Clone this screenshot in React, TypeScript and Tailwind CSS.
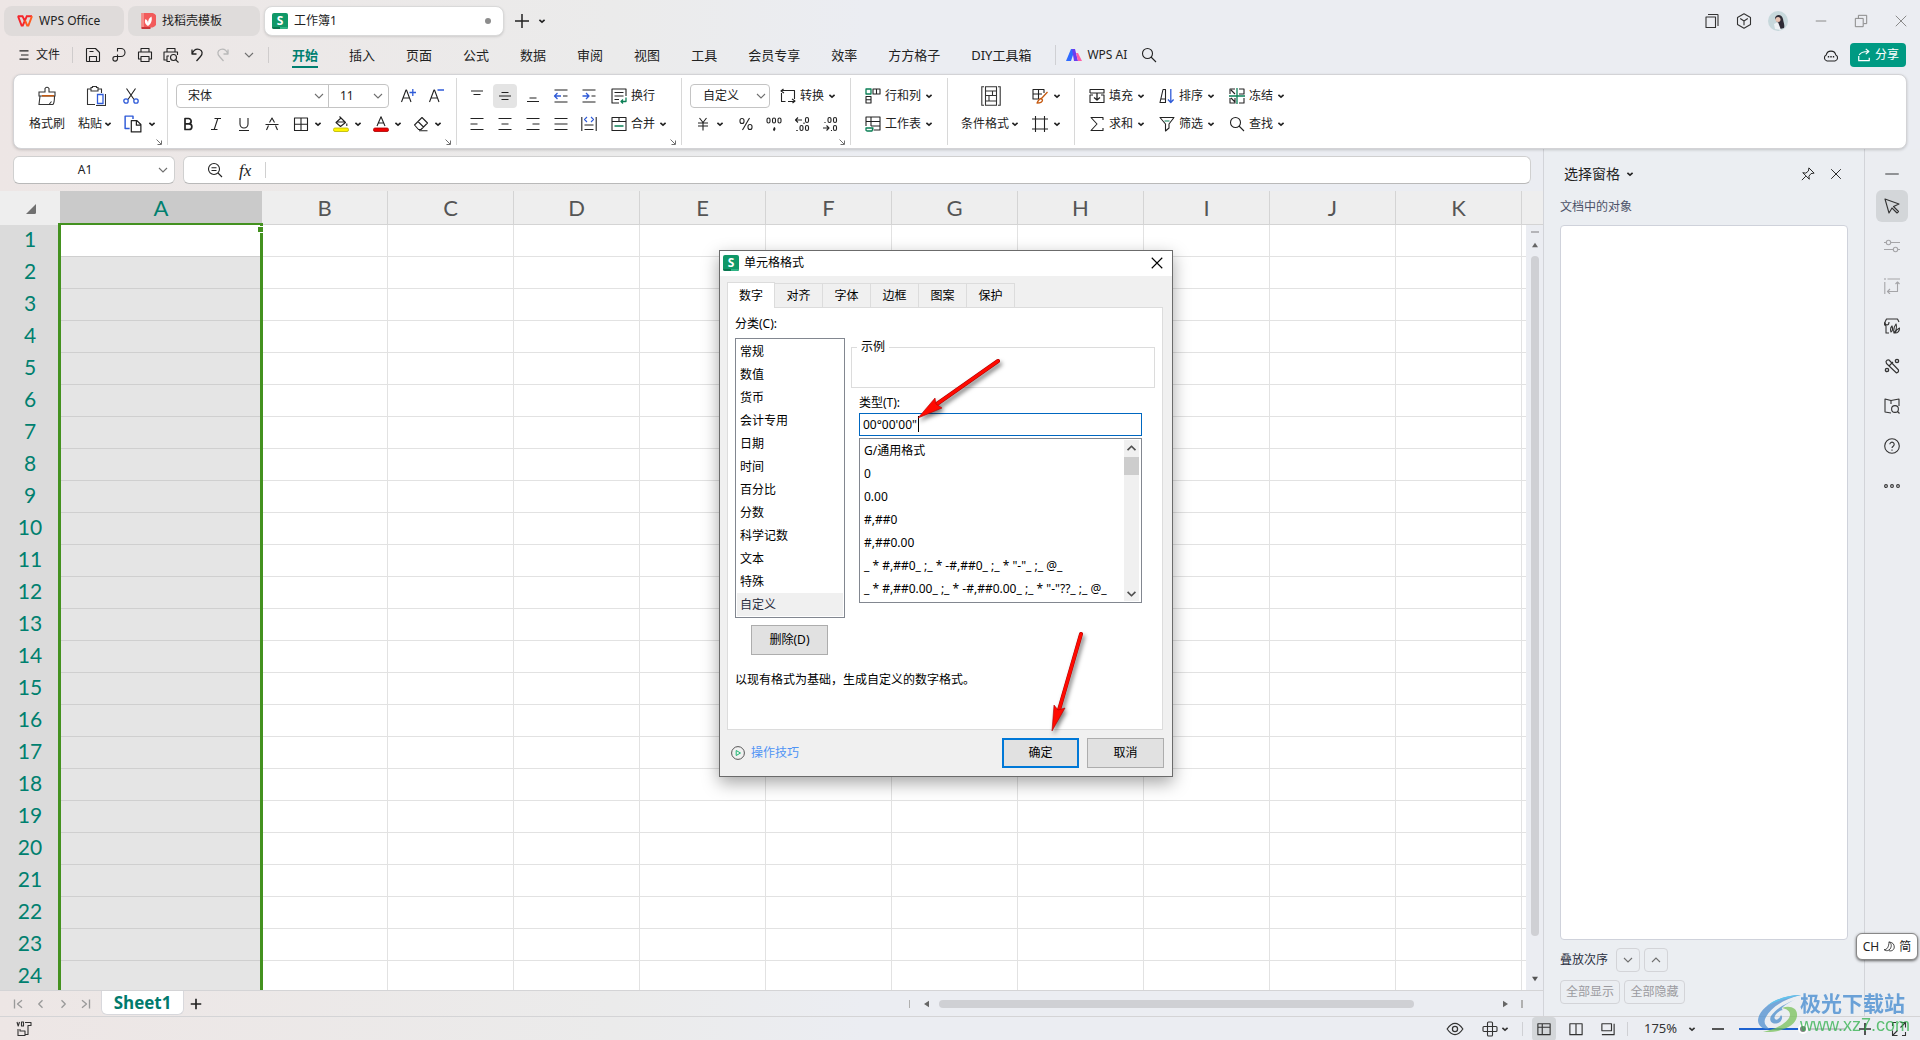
import { useState, type ReactNode } from "react";

const MENUS = ["开始", "插入", "页面", "公式", "数据", "审阅", "视图", "工具", "会员专享", "效率", "方方格子", "DIY工具箱"];
const COLS = ["B", "C", "D", "E", "F", "G", "H", "I", "J", "K"];
const ROWS = Array.from({ length: 24 }, (_, i) => i + 1);
const DIALOG_TABS = ["数字", "对齐", "字体", "边框", "图案", "保护"];
const CATEGORIES = ["常规", "数值", "货币", "会计专用", "日期", "时间", "百分比", "分数", "科学记数", "文本", "特殊", "自定义"];
const FORMATS = [
  "G/通用格式",
  "0",
  "0.00",
  "#,##0",
  "#,##0.00",
  '_ * #,##0_ ;_ * -#,##0_ ;_ * "-"_ ;_ @_ ',
  '_ * #,##0.00_ ;_ * -#,##0.00_ ;_ * "-"??_ ;_ @_ ',
];

const BLUE = "#2f5bd8";
const GREEN = "#0a7f55";
const ORANGE = "#c55a11";

// 16x16 line icon
function Ic({ children, className = "size-4" }: { children: ReactNode; className?: string }) {
  return (
    <svg viewBox="0 0 16 16" className={`shrink-0 ${className}`} fill="none" stroke="currentColor" strokeWidth="1.1" strokeLinejoin="round">
      {children}
    </svg>
  );
}

function Caret() {
  return (
    <svg viewBox="0 0 10 10" className="size-[10px] shrink-0" fill="none" stroke="currentColor" strokeWidth="1.6">
      <path d="M2.4 3.8 5 6.2 7.6 3.8" />
    </svg>
  );
}

function WideCaret({ className = "" }: { className?: string }) {
  return (
    <svg viewBox="0 0 10 10" className={`size-[10px] shrink-0 text-[#707070] ${className}`} fill="none" stroke="currentColor" strokeWidth="1.1">
      <path d="M1 3 5 7 9 3" />
    </svg>
  );
}

function IconBtn({ label, active, children }: { label: string; active?: boolean; children: ReactNode }) {
  return (
    <button aria-label={label} className="flex h-6 w-7 items-center justify-center">
      <span className={`flex h-6 w-6 items-center justify-center rounded ${active ? "bg-[#e4e4e4]" : ""}`}>{children}</span>
    </button>
  );
}

function DropBtn({ label, children }: { label: string; children: ReactNode }) {
  return (
    <button aria-label={label} className="flex h-6 w-10 items-center pl-0.5">
      <span className="flex w-6 justify-center">{children}</span>
      <Caret />
    </button>
  );
}

function TextBtn({ text, caret = true, children }: { text: string; caret?: boolean; children: ReactNode }) {
  return (
    <button className="flex h-6 items-center">
      <span className="flex w-6 justify-center">{children}</span>
      <span className="mr-[3px]">{text}</span>
      {caret && <Caret />}
    </button>
  );
}

function Group({ width, corner, children }: { width: string; corner?: boolean; children: ReactNode }) {
  return (
    <div className={`relative flex shrink-0 pt-[9px] ${width}`}>
      {children}
      {corner && (
        <svg viewBox="0 0 8 8" className="absolute bottom-0.5 right-1 size-2 text-[#707070]" fill="none" stroke="currentColor">
          <path d="M1.5 1.5 6 6M6.5 2.5v4h-4" />
        </svg>
      )}
    </div>
  );
}

const Divider = () => <div className="my-[3px] w-px shrink-0 bg-[#d8d8d8]" />;

function SheetLogo({ className }: { className: string }) {
  return (
    <span className={`relative flex items-center justify-center overflow-hidden rounded-[2px] bg-[#109868] font-bold leading-none text-white ${className}`}>
      <span className="absolute inset-x-0 bottom-0 h-0.5 bg-[#0a7650]" />
      <span className="absolute bottom-0 right-0 h-0.5 w-1/2 bg-[#2fb585]" />
      S
    </span>
  );
}

function TitleBar() {
  return (
    <header className="flex h-9 shrink-0 items-center gap-1 pl-1 pt-1.5">
      <button className="flex h-[30px] w-[120px] items-center gap-[6px] rounded-lg bg-[#dfdbda] pl-[13px]">
        <svg viewBox="0 0 16 12" className="h-3 w-4" fill="none" strokeWidth="1.900">
          <path d="M.8 1.200h4.700L8.300 7M1 1.200l3.600 9.300h1.200L9.800 1.200h5.200" stroke="#f5252b" />
          <path d="M15 1.200 11.400 10.500h-1.200L8 5.500" stroke="#ff5a1f" />
        </svg>
        WPS Office
      </button>
      <button className="flex h-[30px] w-[132px] items-center gap-[6px] rounded-lg bg-[#dfdcdb] pl-[13px]">
        <svg viewBox="0 0 14 16" className="h-4 w-[15px]">
          <path d="M0 0h7a7 7.500 0 0 1 4 14.500H0z" fill="#f25b5b" />
          <path d="M0 0h2.500v15H0z" fill="#f58a86" />
          <path d="M0 14h9v2H0z" fill="#c9363a" />
          <path d="M6.500 13C3 11 3 8 4 6c2 1 2.500 3 2.500 4.500C6.500 7 7.500 5 10 3.500c1 4-.500 7.500-3.500 9.500z" fill="#fff" />
        </svg>
        找稻壳模板
      </button>
      <button className="flex h-[30px] w-60 items-center rounded-lg border border-[#d9d9d9] bg-white pl-[7px] pr-[12px] shadow-sm">
        <SheetLogo className="mr-[6px] size-4 text-[12px]" />
        工作簿1
        <span className="ml-auto size-1.5 rounded-full bg-[#8c8c8c]" />
      </button>
      <button aria-label="新建" className="ml-1.5">
        <Ic className="size-4"><path d="M8 1v14M1 8h14" strokeWidth="1.500" /></Ic>
      </button>
      <button aria-label="标签列表" className="ml-[3px]"><Caret /></button>
      <div className="ml-auto flex items-center pr-3 text-[#333]">
        <button aria-label="窗口" className="mr-4"><Ic><path d="M2 4h9.500v10.500H2zM4 1.500h9.500q.5 0 .5.500v11" /></Ic></button>
        <button aria-label="应用" className="mr-4">
          <Ic><path d="M8 .8 14.500 4.500v7L8 15.200 1.500 11.500v-7zM4.200 5.500 8 8l3.800-2.500M8 8v4.200" /></Ic>
        </button>
        <button aria-label="账户" className="mr-[26px]">
          <svg viewBox="0 0 20 20" className="size-5">
            <circle cx="10" cy="10" r="10" fill="#c7d8dc" />
            <path d="M7 7c1-4 7-4 8 1 .500 4 2 6 1 9l-4 1-3-7z" fill="#2d2a35" />
            <circle cx="10" cy="8.500" r="2.500" fill="#e8c4b4" />
            <path d="M6 13l4-2 3 8-6-1z" fill="#eef2f5" />
          </svg>
        </button>
        <div className="flex items-center gap-[26px] text-[#858585]">
          <button aria-label="最小化"><Ic className="size-3.5"><path d="M2 8h12" /></Ic></button>
          <button aria-label="还原"><Ic className="size-3.5"><path d="M1.500 5h9v9.500h-9zM5 5V1.500h9.500V11H11" /></Ic></button>
          <button aria-label="关闭"><Ic className="size-3.5"><path d="m2 2 12 12M14 2 2 14" /></Ic></button>
        </div>
      </div>
    </header>
  );
}

function MenuBar() {
  const [menu, setMenu] = useState("开始");
  return (
    <nav className="flex h-[38px] shrink-0 items-center pl-[18px] pr-[14px]">
      <button className="flex items-center gap-[6px]">
        <Ic className="size-3"><path d="M2 2.500h12M4 8h10M2 13.500h12" strokeWidth="1.500" /></Ic>
        文件
      </button>
      <span className="ml-3 mr-3 h-4 w-px bg-[#cfcccc]" />
      <div className="flex items-center gap-[10px]">
        <button aria-label="保存"><Ic><path d="M2 1.500h8.500l4 4V14q0 .5-.5.500H2q-.5 0-.5-.500V2q0-.5.5-.500zM4.500 14.500v-5h7v5M4.500 4.500h4" /></Ic></button>
        <button aria-label="输出PDF"><Ic><path d="M6.500 4.500V1.500H10a4 4 0 0 1 0 8H4a2.300 2.300 0 1 0 2.500 2.300V7.500" /></Ic></button>
        <button aria-label="打印"><Ic><path d="M4 5V1.500h8V5M4 12H1.500V5h13v7H12M4 9.500h8v5H4z" /></Ic></button>
        <button aria-label="打印预览"><Ic><path d="M4 5V1.500h8V5M3.500 13H1V5h13.500v3M6 9H4v5.500h3" /><circle cx="10.500" cy="10.500" r="3" /><path d="m12.800 12.800 2.700 2.700" /></Ic></button>
        <button aria-label="撤销"><Ic><path d="M3 2.500v4.500h4.500M3 7C4.500 3.500 7.500 1.500 10.500 2.500c3 1 3.500 4.500 1 7L7.500 14" strokeWidth="1.300" /></Ic></button>
        <button aria-label="恢复" className="text-[#b9b9b9]"><Ic><path d="M13 2.500v4.500H8.500M13 7C11.500 3.500 8.500 1.500 5.500 2.500c-3 1-3.500 4.500-1 7L8.500 14" strokeWidth="1.300" /></Ic></button>
        <button aria-label="更多" className="ml-[3px]"><WideCaret className="text-[#333]" /></button>
      </div>
      <span className="ml-[14px] mr-[23px] h-4 w-px bg-[#cfcccc]" />
      <div className="flex gap-[31px] text-[13px]">
        {MENUS.map((m) => (
          <button
            key={m}
            onClick={() => setMenu(m)}
            className={`whitespace-nowrap border-b-2 pb-px pt-[3px] leading-5 ${m === menu ? "border-[#007f70] font-bold text-[#007f70]" : "border-transparent"}`}
          >
            {m}
          </button>
        ))}
      </div>
      <span className="ml-6 mr-[10px] h-5 w-px bg-[#cfd0d4]" />
      <button className="flex items-center gap-[5px]">
        <svg viewBox="0 0 16 12" className="h-3 w-4">
          <path d="M5 0h4L5 12H0z" fill="#2f6bff" />
          <path d="M6 0h3l3 12H8z" fill="#6a3df0" />
          <path d="M10 4h2l4 8h-4z" fill="#ff5fa8" />
        </svg>
        WPS AI
      </button>
      <button aria-label="搜索" className="ml-[14px]"><Ic><circle cx="6.500" cy="6.500" r="5" /><path d="m10 10 5 5" /></Ic></button>
      <div className="ml-auto flex items-center gap-[11px]">
        <button aria-label="云状态">
          <Ic><path d="M4 14a3.200 3.200 0 0 1-.8-6 4.900 4.900 0 0 1 9.600 0 3.200 3.200 0 0 1-.8 6z" /><path d="M4.800 9.800h1.400M7.300 9.800h1.400M9.800 9.800h1.400" strokeWidth="1.600" /></Ic>
        </button>
        <button className="flex h-6 w-[56px] items-center justify-center gap-1 rounded bg-[#009a83] text-white">
          <Ic className="size-3.5"><path d="M2 9v5.500h12V11M2.500 8C4 5 7 4 13 4M10 1l3.500 3L10 7" strokeWidth="1.400" /></Ic>
          分享
        </button>
      </div>
    </nav>
  );
}

function Ribbon() {
  return (
    <section className="relative z-10 mx-[13px] flex h-[75px] shrink-0 overflow-hidden rounded-lg border border-[#d3d3d6] bg-white shadow-[0_1px_3px_rgba(0,0,0,0.18)]">
      <Group width="w-[153px]" corner>
        <div className="flex pl-[15px]">
          <button className="mr-[13px] flex flex-col items-center gap-1">
            <span className="flex h-6 items-center">
              <svg viewBox="0 0 20 20" className="size-5" fill="none" stroke="#333" strokeWidth="1.100">
                <path d="M8 6V2.500Q10 0 12 2.500V6h6v4H2V6zM3 10 2 18.500h14q1.500-2 1.500-8.500M12 18.500l2.500-3" />
                <path d="M5 9.800h12" stroke={ORANGE} strokeWidth="1.500" />
              </svg>
            </span>
            <span className="h-6 leading-6">格式刷</span>
          </button>
          <button className="mr-[9px] flex flex-col items-center gap-1">
            <span className="flex h-6 items-center">
              <svg viewBox="0 0 20 20" className="size-5" fill="none" stroke="#333" strokeWidth="1.100">
                <path d="M5 3H1.500v15.500H9M12 3h3.500v4M5 1.500h1.500V.5h4v1H12V5H5z" />
                <path d="M11.500 8.500H17v9h-5.500z" stroke={BLUE} strokeWidth="1.300" />
                <path d="M19.500 8v11.500H10" />
              </svg>
            </span>
            <span className="flex h-6 items-center gap-px">粘贴<Caret /></span>
          </button>
          <div className="flex flex-col gap-1">
            <button aria-label="剪切" className="flex h-6 w-6 items-center pl-px">
              <Ic><path d="M3.500.5 11 11.500M12.500.5 5 11.500" /><g stroke={BLUE} strokeWidth="1.300"><circle cx="3" cy="13" r="2.200" /><circle cx="13" cy="13" r="2.200" /></g></Ic>
            </button>
            <button aria-label="复制" className="flex h-6 items-center gap-[5px] pl-0.5">
              <Ic className="size-[18px]"><path d="M5 12H1V1h7v2.500" stroke={BLUE} strokeWidth="1.300" /><path d="M6.500 5h5l3.500 3.500v6.500H6.500zM11 5v4h4" /></Ic>
              <Caret />
            </button>
          </div>
        </div>
      </Group>
      <Divider />
      <Group width="w-[288px]" corner>
        <div className="flex flex-col gap-1 pl-1.5">
          <div className="flex items-center pl-0.5">
            <div className="mr-[5px] flex h-6 w-[213px] items-center rounded border border-[#c4c4c4] bg-white">
              <select aria-label="字体" className="h-full w-[152px] shrink-0 appearance-none border-r border-[#c4c4c4] pl-[11px] outline-none"><option>宋体</option></select>
              <WideCaret className="-ml-[15px] mr-[5px]" />
              <select aria-label="字号" className="h-full min-w-0 flex-1 appearance-none pl-[11px] outline-none"><option>11</option></select>
              <WideCaret className="mr-[5px]" />
            </div>
            <IconBtn label="增大字号"><Ic><path d="M1.500 14 6 2h.5L11 14M3 10h6.500" /><path d="M9.500 4.500H16M12.800 1v7" stroke={BLUE} strokeWidth="1.300" /></Ic></IconBtn>
            <IconBtn label="减小字号"><Ic><path d="M1.500 14 6 2h.5L11 14M3 10h6.500" /><path d="M9.500 2H16" stroke={BLUE} strokeWidth="1.300" /></Ic></IconBtn>
          </div>
          <div className="flex">
            <IconBtn label="加粗"><Ic><path d="M5 2.500h3.500a2.600 2.600 0 0 1 0 5.300H5zM5 7.800h4a2.800 2.800 0 0 1 0 5.700H5z" strokeWidth="1.700" /></Ic></IconBtn>
            <IconBtn label="倾斜"><Ic><path d="M6.500 2.500H13M3 13.500h6.500M9.800 2.500 6.200 13.500" /></Ic></IconBtn>
            <IconBtn label="下划线"><Ic><path d="M4 2v6a4 4 0 0 0 8 0V2M3 14.500h10" /></Ic></IconBtn>
            <IconBtn label="删除线"><Ic><path d="M5.500 6.500 8 2l2.500 4.500M1.500 8.500h13M4.500 9.500l-2 4.500M11.500 9.500l2 4.500" /></Ic></IconBtn>
            <div className="ml-px flex">
              <DropBtn label="边框"><Ic><path d="M1.500 2h13v12.500h-13zM8 2v12.500M1.500 8.200h13" /></Ic></DropBtn>
              <DropBtn label="填充颜色">
                <Ic><path d="M3 6.500 8 2l4.500 4.500-5 4zM8 2 6.500.5M3.500 6h8M13.800 7.500v2.500" /><rect x=".5" y="12" width="15" height="3.500" rx="1.500" fill="#fff500" stroke="#b9b400" strokeWidth=".8" /></Ic>
              </DropBtn>
              <DropBtn label="字体颜色">
                <Ic><path d="M4 10 8 .8l4 9.200M5.500 7h5" /><rect x=".5" y="12" width="15" height="3.500" rx="1.500" fill="#f00000" stroke="#a80000" strokeWidth=".8" /></Ic>
              </DropBtn>
              <DropBtn label="清除"><Ic><path d="M1.500 9 9 1.500 14.500 7 8 13.500H5.500zM5 5.500l5.500 5.500M6 14.800h8.500" /></Ic></DropBtn>
            </div>
          </div>
        </div>
      </Group>
      <Divider />
      <Group width="w-[224px]" corner>
        <div className="flex flex-col gap-1 pl-[6px]">
          <div className="flex">
            <IconBtn label="顶端对齐"><Ic><path d="M2 3h12M4.500 6.500h7" /></Ic></IconBtn>
            <IconBtn label="垂直居中" active><Ic><path d="M4.500 4.500h7M2 8h12M4.500 11.500h7" /></Ic></IconBtn>
            <IconBtn label="底端对齐"><Ic><path d="M4.500 10h7M2 13.500h12" /></Ic></IconBtn>
            <IconBtn label="减少缩进"><Ic><path d="M1.500 2h13M10 8h4.500M1.500 14h13" /><path d="M8 8H1.500M4.500 5l-3 3 3 3" stroke={BLUE} strokeWidth="1.300" /></Ic></IconBtn>
            <IconBtn label="增加缩进"><Ic><path d="M1.500 2h13M10.500 8h4M1.500 14h13" /><path d="M1.500 8H8M5 5l3 3-3 3" stroke={BLUE} strokeWidth="1.300" /></Ic></IconBtn>
            <div className="ml-1">
              <TextBtn text="换行" caret={false}><Ic><path d="M15 8V1H1v14h7M3.500 4.500h9M3.500 8h9M3.500 11.500H8" /><path d="M15 9.500v4h-5M12 11.500l-2 2 2 2" stroke={GREEN} strokeWidth="1.300" /></Ic></TextBtn>
            </div>
          </div>
          <div className="flex">
            <IconBtn label="左对齐"><Ic><path d="M1.500 2.500h13M1.500 8h7M1.500 13.500h13" /></Ic></IconBtn>
            <IconBtn label="居中"><Ic><path d="M1.500 2.500h13M4.500 8h7M1.500 13.500h13" /></Ic></IconBtn>
            <IconBtn label="右对齐"><Ic><path d="M1.500 2.500h13M7.500 8h7M1.500 13.500h13" /></Ic></IconBtn>
            <IconBtn label="两端对齐"><Ic><path d="M1.500 2.500h13M1.500 8h13M1.500 13.500h13" /></Ic></IconBtn>
            <IconBtn label="分散对齐"><Ic><path d="M.8 1v14M15.200 1v14M3.500 9h9M3.500 13.500h9" /><path d="M6 1 3.500 3.500 6 6M10 1l2.500 2.500L10 6" stroke={BLUE} /></Ic></IconBtn>
            <div className="ml-1">
              <TextBtn text="合并"><Ic><path d="M1 1.500h14v13H1zM1 5.500h14M8 1.500v4" /><path d="M3.500 10h9" stroke={GREEN} strokeWidth="1.500" /></Ic></TextBtn>
            </div>
          </div>
        </div>
      </Group>
      <Divider />
      <Group width="w-[168px]" corner>
        <div className="flex flex-col gap-1 pl-2">
          <div className="flex">
            <div className="mr-[6px] flex h-6 w-20 items-center rounded border border-[#c4c4c4]">
              <select aria-label="数字格式" className="h-full min-w-0 flex-1 appearance-none pl-3 outline-none"><option>自定义</option></select>
              <WideCaret className="mr-[3px]" />
            </div>
            <TextBtn text="转换"><Ic><path d="M1.500 5v8.500h4M14.500 11V2.500h-10M3.500 1 1 3l3 2M12.500 15 15 13l-3-2M8 13.500h6.500M1.500 2.500h5" /></Ic></TextBtn>
          </div>
          <div className="flex">
            <button aria-label="货币" className="flex h-6 w-[42px] items-center pl-px"><span className="flex w-6 justify-center"><Ic><path d="M4.500 2 8 6.500 11.500 2M3 7h10M3 10h10M8 6.500v8" /></Ic></span><Caret /></button>
            <IconBtn label="百分比"><Ic><rect x="2" y="2.500" width="4" height="5" rx="2" /><rect x="10" y="8.500" width="4" height="5" rx="2" /><path d="M11.500 2 4.500 14" /></Ic></IconBtn>
            <IconBtn label="千分位"><Ic><g><rect x="1" y="2" width="3" height="5" rx="1.500" /><rect x="6.500" y="2" width="3" height="5" rx="1.500" /><rect x="12" y="2" width="3" height="5" rx="1.500" /></g><path d="M8 11.500q1.200 1.500-.5 3" strokeWidth="1.800" /></Ic></IconBtn>
            <IconBtn label="增加小数位"><Ic><path d="M8 4H1.500M4 1.500 1.500 4 4 6.500M10 6.500V8" /><rect x="11.500" y="1.500" width="3" height="5" rx="1.500" /><rect x="6" y="9.500" width="3" height="5" rx="1.500" /><rect x="11.500" y="9.500" width="3" height="5" rx="1.500" /><path d="M3 14v1" strokeWidth="1.500" /></Ic></IconBtn>
            <IconBtn label="减少小数位"><Ic><path d="M1 12h6M4.500 9.500 7 12l-2.500 2.500M9.500 14v1M3 6v1" /><rect x="11.500" y="9.500" width="3" height="5" rx="1.500" /><rect x="6" y="1.500" width="3" height="5" rx="1.500" /><rect x="11.500" y="1.500" width="3" height="5" rx="1.500" /></Ic></IconBtn>
          </div>
        </div>
      </Group>
      <Divider />
      <Group width="w-24">
        <div className="flex flex-col gap-1 pl-[10px]">
          <TextBtn text="行和列"><Ic><path d="M1 1h5v5H1z" stroke={GREEN} strokeWidth="1.300" /><path d="M8 1h7v5H8zM11.500 1v5M1 8.500h5V15H1zM1 11.700h5" /></Ic></TextBtn>
          <TextBtn text="工作表"><Ic><path d="M1 10V1h14v13H8.500M1 5.500h14M6 1v9M6 10h9" /><path d="M1 12h7l-1 3H2.500Q1 15 1 14z" stroke={GREEN} strokeWidth="1.300" /></Ic></TextBtn>
        </div>
      </Group>
      <Divider />
      <Group width="w-[126px]">
        <div className="flex gap-2 pl-[13px]">
          <button className="flex flex-col items-center gap-1">
            <span className="flex h-6 items-center">
              <svg viewBox="0 0 20 20" className="size-5" fill="none" stroke="#333" strokeWidth="1.100">
                <path d="M3 .8H.8v18.400H3M17 .8h2.200v18.400H17M4.500.8h11v18.400h-11zM4.500 5h11M4.500 9.500H8v5.500M11.500 5v4.500h4M4.500 15h11M8 9.500h7.500" />
              </svg>
            </span>
            <span className="flex h-6 items-center gap-px">条件格式<Caret /></span>
          </button>
          <div className="flex flex-col gap-1">
            <button aria-label="单元格样式" className="flex h-6 items-center">
              <span className="flex w-6 justify-center"><Ic><path d="M7 11H1V1.500h11V5M1 6h9M6.500 1.500V11" /><path d="M15.500 4 9 11M9 10.500c-2 0-2.500 2-4 4.500 3 0 5.500-.5 5.500-3z" stroke={ORANGE} strokeWidth="1.300" /></Ic></span>
              <Caret />
            </button>
            <button aria-label="单元格" className="flex h-6 items-center">
              <span className="flex w-6 justify-center"><Ic><path d="M3.500 0v16M12.500 0v16M0 3h16M0 13h16" /></Ic></span>
              <Caret />
            </button>
          </div>
        </div>
      </Group>
      <Divider />
      <Group width="w-[240px]">
        <div className="grid auto-cols-max grid-flow-col grid-rows-[24px_24px] content-start gap-x-[9px] gap-y-1 pl-[10px]">
          <TextBtn text="填充"><Ic><path d="M1 5V1.500h14V5H1M4 7H1v7.500h14V7h-3" /><path d="M8 5v7M5 9.500 8 12l3-2.500" strokeWidth="1.300" /></Ic></TextBtn>
          <TextBtn text="求和"><Ic><path d="M14 4V1.500H2L8 8l-6 6.500h12V12" /></Ic></TextBtn>
          <TextBtn text="排序"><Ic><path d="M1 14.500 4 1.500h2.500v13zM1.500 11h5" /><path d="M11.800 1v13.500M9 11.500l2.800 3 2.800-3" stroke={BLUE} strokeWidth="1.300" /></Ic></TextBtn>
          <TextBtn text="筛选"><Ic><path d="M1 1.500h14L10 8v4l-3.500 3V8z" /><path d="M5.500 5h5" stroke={GREEN} /></Ic></TextBtn>
          <TextBtn text="冻结"><Ic><path d="M6 1H1v5M1 10v5h5V10M10 1h5v5h-5M15 10v5h-5M2 2l4 4M2 10l4 4" /><path d="M8 0v16M0 8h16" stroke={GREEN} strokeWidth="1.300" /></Ic></TextBtn>
          <TextBtn text="查找"><Ic><circle cx="6.500" cy="6.500" r="5" /><path d="m10 10 5 5" /></Ic></TextBtn>
        </div>
      </Group>
    </section>
  );
}

function Sheet() {
  return (
    <div className="flex min-h-0 flex-1 overflow-hidden">
      <div className="relative min-w-0 flex-1 overflow-hidden bg-white">
        <table className="w-full table-fixed border-separate border-spacing-0 font-['Lato',sans-serif] text-[22px] leading-none">
          <thead>
            <tr className="h-[34px]">
              <th className="w-[60px] bg-[#eeeeee] p-0">
                <svg viewBox="0 0 10 10" className="ml-[26px] mt-[2px] size-[10px]"><path d="M10 0v8.500q0 1.500-1.500 1.500H0z" fill="#707070" /></svg>
              </th>
              <th className="w-[202px] bg-[#cacaca] p-0 font-normal text-[#00806f]">A</th>
              {COLS.map((c) => (
                <th key={c} className="w-[126px] border-b border-r border-[#d4d4d4] bg-[#eeeeee] p-0 font-normal text-[#555]">{c}</th>
              ))}
              <th className="border-b border-[#d4d4d4] bg-[#eeeeee] p-0" />
            </tr>
          </thead>
          <tbody>
            {ROWS.map((r) => (
              <tr key={r} className="h-8">
                <th className="bg-[#dbdbdb] p-0 pb-[6px] text-[21px] font-normal text-[#00806f]">{r}</th>
                <td className={`border-b border-[#cfcfcf] p-0 ${r === 1 ? "bg-white" : "bg-[#e5e5e5]"}`} />
                {COLS.map((c) => (
                  <td key={c} className="border-b border-r border-[#e2e2e2] p-0" />
                ))}
                <td className="border-b border-[#e2e2e2] p-0" />
              </tr>
            ))}
          </tbody>
        </table>
        {/* selection frame over column A */}
        <div className="pointer-events-none absolute -bottom-1 left-[58px] top-8 w-[205px] border-x-[3px] border-t-2 border-[#43911f]">
          <span className="absolute -right-1 top-px size-[7px] border border-white bg-[#43911f]" />
        </div>
      </div>
      <div className="flex w-[17px] flex-col items-center bg-[#ebedf2]">
        <div className="h-[34px] w-full shrink-0 border-b border-[#d4d4d4] bg-[#eeeeee]" />
        <span className="mt-[6px] h-0.5 w-2 shrink-0 bg-[#b4b4b8]" />
        <svg viewBox="0 0 8 6" className="mt-[9px] h-1.5 w-1.5 shrink-0"><path d="M4 0l4 6H0z" fill="#666" /></svg>
        <div className="mt-2 w-2 flex-1 rounded-full bg-[#cfd0d4]" />
        <svg viewBox="0 0 8 6" className="mb-2 mt-10 h-1.5 w-1.5 shrink-0"><path d="M4 6l4-6H0z" fill="#555" /></svg>
      </div>
    </div>
  );
}

function SheetTabs() {
  return (
    <div className="flex h-[26px] shrink-0 items-center border-t border-[#d4d4d6]">
      <div className="flex w-[101px] items-center gap-[10px] pl-[13px] text-[#9a9a9a]">
        <button aria-label="第一个"><Ic className="size-3"><path d="M2 2v12M12 3 6 8l6 5" strokeWidth="1.800" /></Ic></button>
        <button aria-label="上一个"><Ic className="size-3"><path d="M10 3 5 8l5 5" strokeWidth="1.800" /></Ic></button>
        <button aria-label="下一个"><Ic className="size-3"><path d="m6 3 5 5-5 5" strokeWidth="1.800" /></Ic></button>
        <button aria-label="最后一个"><Ic className="size-3"><path d="M14 2v12M4 3l6 5-6 5" strokeWidth="1.800" /></Ic></button>
      </div>
      <button className="mb-px h-6 w-[83px] rounded-b-md border border-t-0 border-[#d8d8dc] bg-white font-['Open_Sans',sans-serif] text-[17px] font-bold leading-[22px] text-[#007a6c]">Sheet1</button>
      <button aria-label="新建工作表" className="ml-1.5"><Ic className="size-3"><path d="M8 1v14M1 8h14" strokeWidth="2.200" /></Ic></button>
      <div className="ml-auto flex w-[634px] items-center pr-5">
        <span className="h-2 w-px bg-[#b0b0b0]" />
        <svg viewBox="0 0 6 8" className="ml-[14px] h-2 w-[5px]"><path d="M0 4l6-4v8z" fill="#666" /></svg>
        <div className="ml-2.5 h-2 w-[475px] rounded-full bg-[#cfd0d4]" />
        <svg viewBox="0 0 6 8" className="ml-auto h-2 w-[5px]"><path d="M6 4 0 0v8z" fill="#666" /></svg>
        <span className="ml-[13px] h-2 w-0.5 bg-[#b0b0b0]" />
      </div>
    </div>
  );
}

function SelectionPane() {
  return (
    <aside className="flex w-[321px] shrink-0 flex-col border-l border-[#d2d4d9] bg-[#ebeef2] px-4 pt-[13px]">
      <div className="flex items-center pl-1">
        <button className="flex items-center gap-[5px] text-[14px] leading-6">选择窗格<Caret /></button>
        <button aria-label="固定" className="ml-auto"><Ic className="size-3.5"><path d="m9 1 6 6-3.500.5-2.500 3 .5 3.500L2 6.500l3.500.5 3-2.500zM5.500 10.500 1 15" /></Ic></button>
        <button aria-label="关闭窗格" className="ml-[14px] mr-[5px]"><Ic className="size-3.5"><path d="M2.500 2.500l11 11M13.500 2.500l-11 11" /></Ic></button>
      </div>
      <p className="mb-2 mt-[11px] leading-[20px] text-[#4d5268]">文档中的对象</p>
      <div className="flex-1 rounded border border-[#cfd2db] bg-white" />
      <div className="mt-2 flex items-center text-[#2a2e40]">
        叠放次序
        <button aria-label="下移" className="ml-2 flex size-6 items-center justify-center rounded border border-[#d3d4d8] text-[#aaa]"><WideCaret /></button>
        <button aria-label="上移" className="ml-1 flex size-6 items-center justify-center rounded border border-[#d3d4d8] text-[#aaa]"><WideCaret className="rotate-180" /></button>
      </div>
      <div className="mb-3 mt-2 flex gap-1 text-[#9b9ba0]">
        <button className="h-6 w-[60px] rounded border border-[#d3d4d8]">全部显示</button>
        <button className="h-6 w-[61px] rounded border border-[#d3d4d8]">全部隐藏</button>
      </div>
    </aside>
  );
}

function SideRail() {
  return (
    <div className="flex w-[56px] shrink-0 flex-col items-center gap-2 border-l border-[#d2d4d9] bg-[#ebedf1] pr-0.5 pt-6 text-[#333]">
      <span className="mb-[7px] h-0.5 w-3.5 rounded bg-[#909295]" />
      <button aria-label="选择" className="flex size-8 items-center justify-center rounded-md bg-[#d3d6d9]"><Ic><path d="m1 1 14 5-5.500 2.500 5 5-1.500 1.500-5-5L5 15z" /></Ic></button>
      <button aria-label="属性" className="flex size-8 items-center justify-center text-[#a5a5a8]"><Ic><circle cx="4.500" cy="4.500" r="2.200" /><circle cx="11.500" cy="11.500" r="2.200" /><path d="M0 4.500h2.300M6.700 4.500H16M0 11.500h9.300M13.700 11.500H16" /></Ic></button>
      <button aria-label="裁剪" className="flex size-8 items-center justify-center text-[#a5a5a8]"><Ic><path d="M3.500 1H16M.8 4v12M1 0v2M3.500 13.500h10V4M6 11l-2.500 2.500L6 16M11.500 6l2-2 2 2" /></Ic></button>
      <button aria-label="稻壳" className="flex size-8 items-center justify-center"><Ic><path d="M5 15H2V8a2.500 2.500 0 0 1-1-4l1.500-3h11l1.500 3M1 4c0 4 4 4 4 0M7 14c-1-3 0-5 1-6 1 3 1 5-1 6zM10 15c-1-4 .5-7 2-9 1 3 0 7-2 9zM11 15c1-3 2-4 4.500-5 0 3-1.500 5-4.500 5z" /></Ic></button>
      <button aria-label="工具" className="flex size-8 items-center justify-center"><Ic><path d="M2 3.500Q3 1.500 5 2l9.500 10q.5 2.500-2 3L2.500 5.500zM5 8l4-4" /><circle cx="13" cy="3" r="1.600" strokeWidth="1.400" /><circle cx="3" cy="12" r="1.600" strokeWidth="1.400" /></Ic></button>
      <button aria-label="查阅" className="flex size-8 items-center justify-center"><Ic><path d="M7 15 1 14V1l6 1.500 8-1.500v7M7 2.500V6" /><circle cx="11" cy="11" r="3.400" /><path d="m13.500 13.500 2 2" /></Ic></button>
      <button aria-label="帮助" className="flex size-8 items-center justify-center"><Ic><circle cx="8" cy="8" r="7.300" /><path d="M5.800 6.200a2.200 2.200 0 1 1 3.400 2Q8 9 8 10M8 11.500v1.300" /></Ic></button>
      <button aria-label="更多" className="flex size-8 items-center justify-center"><Ic><circle cx="2" cy="8" r="1.400" /><circle cx="8" cy="8" r="1.400" /><circle cx="14" cy="8" r="1.400" /></Ic></button>
    </div>
  );
}

function StatusBar() {
  return (
    <footer className="flex h-6 shrink-0 items-center border-t border-[#d4d4d6] text-[#333]">
      <button aria-label="宏" className="ml-4"><Ic><path d="M1 1l1.200 4L3.500 1M5.500 1v4h2V1zM9 1.500h6v3h-3v9H9M2 8v6.500h7V10H4V8" /></Ic></button>
      <div className="ml-auto flex w-[474px] shrink-0 items-center">
        <button aria-label="护眼"><Ic className="size-[18px]"><path d="M1 8q7-10 14 0-7 10-14 0z" /><circle cx="8" cy="8" r="2.300" /></Ic></button>
        <button aria-label="阅读模式" className="ml-[18px] flex items-center gap-0.5"><Ic><rect x="5.500" y="1" width="5" height="14" rx="1" /><rect x="1" y="5.500" width="14" height="5" rx="1" /></Ic><Caret /></button>
        <span className="ml-3 h-3.5 w-px bg-[#cfd0d4]" />
        <button aria-label="普通视图" className="ml-[9px] flex h-6 w-6 items-center justify-center rounded bg-[#d3d6d9]"><Ic className="size-3.5"><path d="M1 2h14v12.500H1zM1 6h14M6 2v12.500" strokeWidth="1.300" /></Ic></button>
        <button aria-label="分页预览" className="ml-[13px]"><Ic className="size-3.5"><path d="M1 2h14v12.500H1zM8 2v12.500" strokeWidth="1.300" /></Ic></button>
        <button aria-label="页面布局" className="ml-[18px]"><Ic className="size-3.5"><path d="M1 2h11v8H1zM15 2v12.500H1" strokeWidth="1.300" /></Ic></button>
        <span className="ml-3 h-3.5 w-px bg-[#cfd0d4]" />
        <button className="ml-4 flex items-center gap-[10px] text-[13px]">175%<Caret /></button>
        <button aria-label="缩小" className="ml-[15px]"><Ic className="size-3"><path d="M0 8h16" strokeWidth="2.200" /></Ic></button>
        <label className="ml-[15px] flex w-[106px] items-center">
          <input type="range" aria-label="缩放" defaultValue={61} className="h-0.5 w-full appearance-none bg-[linear-gradient(to_right,#1e62d0_61%,#c4c6ca_61%)] [&::-webkit-slider-thumb]:size-2.5 [&::-webkit-slider-thumb]:appearance-none [&::-webkit-slider-thumb]:rounded-full [&::-webkit-slider-thumb]:border-2 [&::-webkit-slider-thumb]:border-white [&::-webkit-slider-thumb]:bg-[#808080]" />
        </label>
        <button aria-label="放大" className="ml-[14px]"><Ic className="size-3"><path d="M0 8h16M8 0v16" strokeWidth="2.200" /></Ic></button>
        <button aria-label="全屏" className="ml-5"><Ic><path d="M9.500 1.500h5v5M14.500 1.500 9.500 6.500M6.500 14.500h-5v-5M1.500 14.500l5-5M1.500 5V1.500H5M14.500 11v3.500H11" /></Ic></button>
      </div>
    </footer>
  );
}

function FormatDialog() {
  const [tab, setTab] = useState("数字");
  const [category, setCategory] = useState("自定义");
  return (
    <div role="dialog" aria-label="单元格格式" className="absolute left-[719px] top-[250px] z-20 w-[454px] border border-[#6b6b6b] bg-[#f0f0f0] text-black shadow-[0_6px_16px_rgba(0,0,0,0.35)]">
      <div className="flex h-[25px] items-center bg-white pb-px pl-[3px] pr-[9px]">
        <SheetLogo className="size-4 text-[12px]" />
        <span className="ml-[5px]">单元格格式</span>
        <button aria-label="关闭" className="ml-auto"><Ic className="size-3"><path d="m1 1 14 14M15 1 1 15" strokeWidth="1.500" /></Ic></button>
      </div>
      <div className="px-[7px] pt-1.5">
        <div role="tablist" className="flex items-end">
          {DIALOG_TABS.map((t) => (
            <button
              key={t}
              role="tab"
              aria-selected={t === tab}
              onClick={() => setTab(t)}
              className={
                t === tab
                  ? "relative z-10 -mb-px h-[26px] w-12 border border-b-0 border-[#dcdcdc] bg-white"
                  : "h-6 w-12 border border-b-0 border-l-0 border-[#dcdcdc] bg-[#f0f0f0]"
              }
            >
              {t}
            </button>
          ))}
        </div>
        <div className="h-[423px] w-[436px] border border-[#dcdcdc] bg-white px-[7px] pt-[6px]">
          <label className="block h-5 leading-[20px]">分类(C):</label>
          <div className="mt-1 flex">
            <ul role="listbox" aria-label="分类" className="h-[280px] w-[110px] shrink-0 border border-[#828790] p-px">
              {CATEGORIES.map((c) => (
                <li
                  key={c}
                  role="option"
                  aria-selected={c === category}
                  onClick={() => setCategory(c)}
                  className={`h-[23px] pl-[3px] leading-[23px] ${c === category ? "bg-[#f0f0f0] text-[#2a2e40]" : ""}`}
                >
                  {c}
                </li>
              ))}
            </ul>
            <div className="ml-[6px] w-[304px]">
              <fieldset className="h-[50px] border border-[#dcdcdc] pl-[5px]">
                <legend className="px-1 leading-[18px]">示例</legend>
              </fieldset>
              <div className="ml-2 mt-[5px] w-[283px]">
                <label htmlFor="fmt" className="block h-5 leading-[20px]">类型(T):</label>
                <div className="relative">
                  <input id="fmt" defaultValue={"00°00'00\""} className="block h-[23px] w-full border border-[#0067c0] bg-white pl-[3px] outline-none" />
                  <span className="absolute left-[59px] top-[3px] h-4 w-px bg-black" />
                </div>
                <div className="mt-0.5 flex h-[165px] border border-[#828790] pr-0.5">
                  <ul role="listbox" aria-label="类型" className="flex-1 overflow-hidden">
                    {FORMATS.map((f) => (
                      <li key={f} role="option" aria-selected={false} className="h-[23px] whitespace-pre pl-1 leading-[23px]">{f}</li>
                    ))}
                  </ul>
                  <div className="my-px flex w-[15px] flex-col items-center bg-[#f0f0f0] text-[#505050]">
                    <Ic className="my-1 size-[9px]"><path d="m1 11 7-7 7 7" strokeWidth="3" /></Ic>
                    <div className="h-[18px] w-full bg-[#cdcdcd]" />
                    <Ic className="mb-[3px] mt-auto size-[9px]"><path d="m1 5 7 7 7-7" strokeWidth="3" /></Ic>
                  </div>
                </div>
              </div>
            </div>
          </div>
          <button className="ml-4 mt-[7px] h-[30px] w-[77px] border border-[#adadad] bg-[#e1e1e1]">删除(D)</button>
          <p className="mt-[15px] leading-[20px]">以现有格式为基础，生成自定义的数字格式。</p>
        </div>
      </div>
      <div className="flex h-[46px] items-center pl-[11px] pr-2">
        <a href="#" className="flex items-center gap-[6px] text-[#4f94f5]">
          <svg viewBox="0 0 14 14" className="size-3.5" fill="none"><circle cx="7" cy="7" r="6.400" stroke="#555" /><path d="M5.200 4.500v5L9.500 7z" stroke="#1fb573" /></svg>
          操作技巧
        </a>
        <button className="ml-auto h-[30px] w-[77px] border-2 border-[#0078d7] bg-[#e1e1e1]">确定</button>
        <button className="ml-2 h-[30px] w-[77px] border border-[#adadad] bg-[#e1e1e1]">取消</button>
      </div>
    </div>
  );
}

function Arrow({ d, head, className, viewBox }: { d: string; head: string; className: string; viewBox: string }) {
  return (
    <svg viewBox={viewBox} className={`pointer-events-none absolute z-30 drop-shadow-[2px_3px_2px_rgba(0,0,0,0.5)] ${className}`}>
      <path d={d} stroke="#b00000" strokeWidth="4" strokeLinecap="round" />
      <path d={d} stroke="#ff0a00" strokeWidth="3" strokeLinecap="round" />
      <path d={head} fill="#ff0a00" stroke="#b00000" strokeWidth=".6" />
    </svg>
  );
}

export default function App() {
  return (
    <div className="relative flex h-screen flex-col overflow-hidden bg-[linear-gradient(to_right,#ede6e5,#ebebeb_32%,#ebedf2_45%)] font-['Noto_Sans','Noto_Sans_CJK_SC',sans-serif] text-[12px] text-[#222]">
      <TitleBar />
      <MenuBar />
      <Ribbon />
      <main className="flex min-h-0 flex-1">
        <div className="flex min-w-0 flex-1 flex-col">
          <div className="flex h-[42px] shrink-0 items-center gap-2 pl-[13px] pr-3">
            <div className="flex h-[28px] w-[162px] items-center rounded-md border border-[#d0d0d0] border-b-[#b9b9b9] bg-white pr-[6px]">
              <input aria-label="名称框" defaultValue="A1" className="w-0 flex-1 pr-0.5 text-center outline-none" />
              <WideCaret />
            </div>
            <div className="flex h-[28px] flex-1 items-center rounded-md border border-[#d0d0d0] border-b-[#b9b9b9] bg-white pl-[23px]">
              <Ic><circle cx="7" cy="7" r="5.500" /><path d="m11 11 4 4M4.500 5.800h5M4.500 8.500h5" /></Ic>
              <span className="ml-4 font-['Liberation_Serif',serif] text-[17px] italic leading-none">fx</span>
              <span className="ml-[14px] h-4 w-px bg-[#d0d0d0]" />
              <input aria-label="编辑栏" className="ml-2 flex-1 outline-none" />
            </div>
          </div>
          <Sheet />
          <SheetTabs />
        </div>
        <SelectionPane />
        <SideRail />
      </main>
      <StatusBar />
      <FormatDialog />
      <Arrow viewBox="0 0 90 66" className="left-[914px] top-[356px] h-[66px] w-[90px]" d="M84 5 20 50" head="M4 62 21 42 22 48 28 52z" />
      <Arrow viewBox="0 0 40 110" className="left-[1046px] top-[628px] h-[110px] w-[40px]" d="M35 6 13 82" head="M6 103 8 77 12 82 19 80z" />
      {/* input method indicator */}
      <div className="absolute bottom-[80px] right-[2px] z-20 flex h-[27px] w-[62px] items-center justify-center gap-1 rounded-md border border-[#888] bg-white shadow-[0_1px_3px_rgba(0,0,0,0.6)]">
        CH
        <Ic className="size-3"><path d="M8 1c4 2 4 8 0 11-2 1.500-5 1-6.500-.5C5 12 8 8 8 1zM9 1.500c4 .5 6 3 6 6.500s-3 6-7 5" /></Ic>
        简
      </div>
      <div className="pointer-events-none absolute bottom-1.5 right-[10px] z-20 flex items-center font-bold leading-none opacity-75">
        <svg viewBox="0 0 46 40" className="-mr-0.5 h-10 w-[46px]">
          <path d="M45 1C22 1 3 14 2 26c0 6 5 10 12 9-5-3-7-7-4-12C15 13 28 5 45 1z" fill="#4f8fd0" />
          <path d="M45 1C30 1 18 6 11 12c9-5 20-8 34-11z" fill="#35b4ea" />
          <path d="M40 5C30 10 20 14 15 22c-3 6 3 10 9 6 2-2 3-5 1-7-1 3-4 6-6 4s2-8 8-9c-3-1-1-4 13-11z" fill="#4a8dcc" />
          <path d="M26 14c8-3 16 0 15 8-1 10-16 17-34 16 14-3 26-10 27-17 0-4-3-6-8-7z" fill="#79c25a" />
        </svg>
        <div>
          <div className="text-[21px] text-[#3f88cf]">极光下载站</div>
          <div className="mt-0.5 font-['Liberation_Sans',sans-serif] text-[18px] font-normal text-[#2fb04a]">www.xz7.com</div>
        </div>
      </div>
    </div>
  );
}
